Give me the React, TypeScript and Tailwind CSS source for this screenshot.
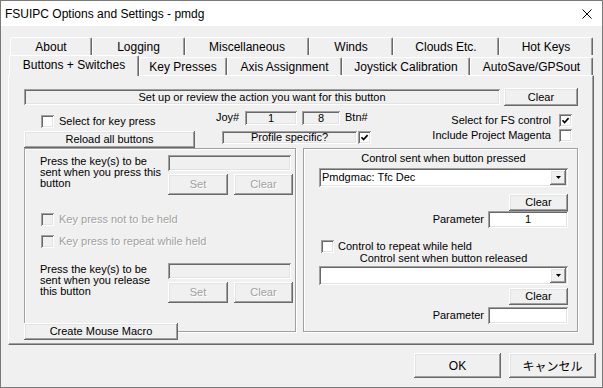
import type { ReactNode } from "react";

const raised =
  "bg-[#f0f0f0] shadow-[inset_-1px_-1px_#696969,inset_1px_1px_#fff,inset_-2px_-2px_#a0a0a0,inset_2px_2px_#e3e3e3]";
const sunken =
  "shadow-[inset_1px_1px_#a0a0a0,inset_-1px_-1px_#fff,inset_2px_2px_#696969,inset_-2px_-2px_#e3e3e3]";
const group =
  "border border-[#a0a0a0] shadow-[inset_1px_1px_#fff,1px_1px_#fff]";
const tab =
  "h-[18px] flex items-center justify-center rounded-t-[2px] border-t border-l border-white border-r border-r-[#696969] shadow-[inset_-1px_0_#a0a0a0]";

const backTabs = [
  { label: "About", w: "w-[82px]" },
  { label: "Logging", w: "w-[93px]" },
  { label: "Miscellaneous", w: "w-[124px]" },
  { label: "Winds", w: "w-[84px]" },
  { label: "Clouds Etc.", w: "w-[106px]" },
  { label: "Hot Keys", w: "w-[94px]" },
];

const frontTabs = [
  { label: "Key Presses", w: "w-[88px]" },
  { label: "Axis Assignment", w: "w-[115px]" },
  { label: "Joystick Calibration", w: "w-[128px]" },
  { label: "AutoSave/GPSout", w: "w-[123px]" },
];

function Btn({
  className = "",
  disabled,
  children,
}: {
  className?: string;
  disabled?: boolean;
  children: ReactNode;
}) {
  return (
    <div
      className={`${raised} flex items-center justify-center shrink-0 ${
        disabled ? "text-[#a0a0a0] [text-shadow:1px_1px_#fff]" : "text-black"
      } ${className}`}
    >
      {children}
    </div>
  );
}

function Check({ checked, disabled }: { checked?: boolean; disabled?: boolean }) {
  return (
    <div
      className={`w-[13px] h-[13px] shrink-0 flex items-center justify-center ${sunken} ${
        disabled ? "bg-[#f0f0f0]" : "bg-white"
      }`}
    >
      {checked && (
        <svg width="9" height="9" viewBox="0 0 9 9">
          <path d="M1.5 4.2 L3.6 6.5 L7.6 2.2" stroke="#000" strokeWidth="1.7" fill="none" />
        </svg>
      )}
    </div>
  );
}

function Combo({ value = "", className = "" }: { value?: string; className?: string }) {
  return (
    <div className={`${sunken} bg-white h-[19px] flex items-center p-[2px] ${className}`}>
      <span className="flex-1 pl-[1px] leading-none">{value}</span>
      <div className={`${raised} w-[16px] h-full flex items-center justify-center`}>
        <svg width="5" height="3" viewBox="0 0 5 3">
          <path d="M0 0h5L2.5 3z" fill="#000" />
        </svg>
      </div>
    </div>
  );
}

function ParamRow({ value = "", className = "" }: { value?: string; className?: string }) {
  return (
    <div className={`flex items-center justify-end gap-[4px] ${className}`}>
      <span>Parameter</span>
      <div className={`${sunken} bg-white w-[80px] h-[17px] flex items-center justify-center`}>
        {value}
      </div>
    </div>
  );
}

function KeyBlock({ lines, className = "" }: { lines: string[]; className?: string }) {
  return (
    <div className={`flex ${className}`}>
      <div className="w-[128px] leading-[11px] mt-[1px]">
        {lines.map((l) => (
          <div key={l}>{l}</div>
        ))}
      </div>
      <div className="flex flex-col">
        <div className={`${sunken} w-[123px] h-[16px]`} />
        <div className="flex gap-[6px] mt-[3px]">
          <Btn disabled className="w-[60px] h-[21px]">
            Set
          </Btn>
          <Btn disabled className="w-[59px] h-[21px]">
            Clear
          </Btn>
        </div>
      </div>
    </div>
  );
}

export default function App() {
  return (
    <div className="w-[603px] h-[388px] border border-[#7a7a7a] bg-[#f0f0f0] flex flex-col overflow-hidden text-black font-['Liberation_Sans',Arial,sans-serif]">
      <div className="h-[25px] shrink-0 bg-white flex items-center justify-between pl-[4px] pr-[10px] text-[12px]">
        <span>FSUIPC Options and Settings - pmdg</span>
        <svg width="10" height="10" viewBox="0 0 10 10">
          <path d="M0.5 0.5L9.5 9.5M9.5 0.5L0.5 9.5" stroke="#000" strokeWidth="1" />
        </svg>
      </div>

      <div className="pt-[11px] text-[12px]">
        <div className="flex ml-[9px]">
          {backTabs.map((t) => (
            <div key={t.label} className={`${tab} ${t.w}`}>
              {t.label}
            </div>
          ))}
        </div>
        <div className="flex items-end h-[20px] ml-[8px]">
          <div className="relative z-10 w-[130px] h-[21px] -mb-[1px] pb-[3px] bg-[#f0f0f0] flex items-center justify-center rounded-t-[2px] border-t border-l border-white border-r border-r-[#696969] shadow-[inset_-1px_0_#a0a0a0]">
            Buttons + Switches
          </div>
          {frontTabs.map((t) => (
            <div key={t.label} className={`${tab} ${t.w}`}>
              {t.label}
            </div>
          ))}
        </div>
      </div>

      <div className="ml-[7px] w-[586px] h-[270px] shrink-0 flex flex-col pl-[15px] pr-[14px] pt-[12px] text-[11px] border-t border-l border-white border-r border-b border-r-[#696969] border-b-[#696969] shadow-[inset_-1px_-1px_#a0a0a0]">
        <div className="flex items-start h-[18px]">
          <div className={`${sunken} w-[476px] h-[16px] mt-[1px] flex items-center justify-center`}>
            Set up or review the action you want for this button
          </div>
          <Btn className="ml-[4px] w-[74px] h-[18px]">Clear</Btn>
        </div>

        <div className="flex h-[42px]">
          <div className="w-[171px] flex flex-col">
            <div className="flex items-center gap-[5px] ml-[17px] mt-[9px] h-[13px]">
              <Check />
              Select for key press
            </div>
            <Btn className="mt-[3px] h-[17px] w-full">Reload all buttons</Btn>
          </div>

          <div className="ml-[21px] flex flex-col">
            <div className="flex items-center mt-[5px] h-[14px]">
              <span className="w-[29px] -mt-[2px]">Joy#</span>
              <div className={`${sunken} w-[52px] h-[14px] flex items-center justify-center`}>1</div>
              <div className={`${sunken} ml-[5px] w-[38px] h-[14px] flex items-center justify-center`}>
                8
              </div>
              <span className="ml-[5px] -mt-[2px]">Btn#</span>
            </div>
            <div className="flex items-center gap-[1px] ml-[6px] mt-[6px]">
              <div className={`${sunken} w-[135px] h-[13px] flex items-center justify-center`}>
                Profile specific?
              </div>
              <Check checked />
            </div>
          </div>

          <div className="ml-auto mr-[7px] flex flex-col items-end">
            <div className="flex items-center gap-[8px] mt-[8px] h-[13px]">
              Select for FS control
              <Check checked />
            </div>
            <div className="flex items-center gap-[8px] mt-[2px] h-[13px]">
              Include Project Magenta
              <Check />
            </div>
          </div>
        </div>

        <div className="flex gap-[7px] h-[184px]">
          <div className={`${group} w-[272px] pl-[15px] pt-[6px] flex flex-col`}>
            <KeyBlock lines={["Press the key(s) to be", "sent when you press this", "button"]} />
            <div className="flex items-center gap-[5px] mt-[18px] h-[13px] ml-[1px] text-[#a0a0a0] [text-shadow:1px_1px_#fff]">
              <Check disabled />
              Key press not to be held
            </div>
            <div className="flex items-center gap-[5px] mt-[9px] h-[13px] ml-[1px] text-[#a0a0a0] [text-shadow:1px_1px_#fff]">
              <Check disabled />
              Key press to repeat while held
            </div>
            <KeyBlock
              className="mt-[15px]"
              lines={["Press the key(s) to be", "sent when you release", "this button"]}
            />
          </div>

          <div className={`${group} w-[275px] pl-[15px] pr-[9px] pt-[3px] flex flex-col`}>
            <div className="text-center leading-[12px]">Control sent when button pressed</div>
            <Combo className="mt-[4px]" value="Pmdgmac: Tfc Dec" />
            <Btn className="self-end mt-[7px] w-[59px] h-[17px]">Clear</Btn>
            <ParamRow value="1" />
            <div className="flex items-center gap-[4px] mt-[12px] ml-[2px] h-[13px]">
              <Check />
              Control to repeat while held
            </div>
            <div className="text-center leading-[12px] -mt-[1px]">Control sent when button released</div>
            <Combo className="mt-[2px]" />
            <Btn className="self-end mt-[3px] w-[59px] h-[17px]">Clear</Btn>
            <ParamRow className="mt-[2px]" />
          </div>
        </div>

        <Btn className="relative w-[154px] h-[17px] -mt-[9px]">Create Mouse Macro</Btn>
      </div>

      <div className="flex justify-end gap-[8px] pr-[6px] mt-[8px] text-[12px]">
        <Btn className="w-[87px] h-[25px]">OK</Btn>
        <Btn className="w-[87px] h-[25px] font-['Noto_Sans_CJK_JP',sans-serif]">キャンセル</Btn>
      </div>
    </div>
  );
}
